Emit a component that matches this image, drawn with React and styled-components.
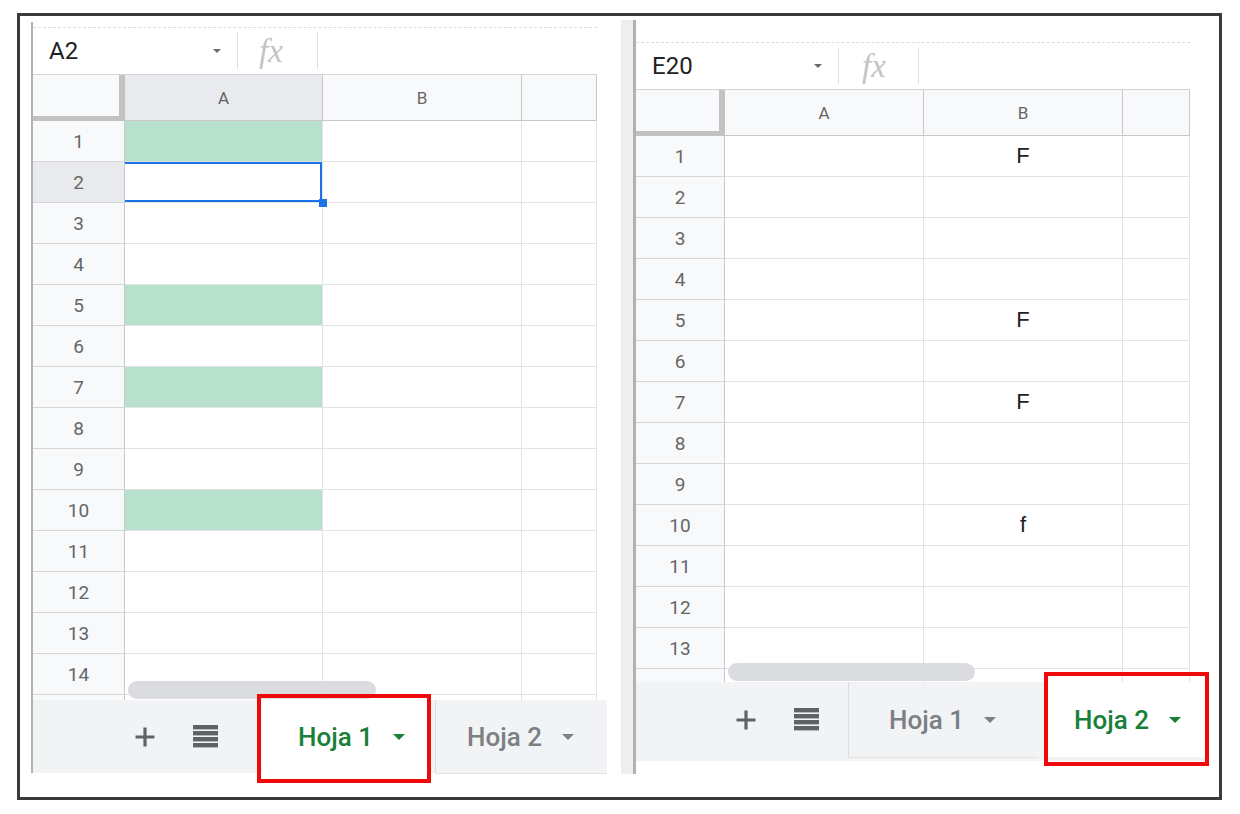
import React from 'react'
import styled, { createGlobalStyle } from 'styled-components'

const GlobalStyle = createGlobalStyle`
  body {
    margin: 0;
    background: #fff;
    font-family: Roboto, "Liberation Sans", Arial, sans-serif;
  }
`

const sheets = [
  {
    id: 'left',
    panel: { width: 576, height: 751, offset: 2, strip: 0, line: 2 },
    topGap: 5,
    width: 564,
    nameBox: 'A2',
    nameWidth: 204,
    fxPad: 21,
    columns: [92, 198, 199, 75],
    letters: ['A', 'B', ''],
    selectedCol: 0,
    selectedRow: 2,
    gridHeight: 626,
    rows: 15,
    labeled: 14,
    fills: [1, 5, 7, 10],
    values: {},
    scroll: { left: 95, width: 248 },
    tabBar: { width: 574, height: 73, tabHeight: 73, padLeft: 82, start: 27, gap: 5 },
    tabs: [
      { label: 'Hoja 1', active: true, width: 168, pad: 36 },
      { label: 'Hoja 2', active: false, width: 172, pad: 31 },
    ],
    mark: { left: 226, top: 672, width: 174, height: 89 },
  },
  {
    id: 'right',
    panel: { width: 588, height: 754, offset: 0, strip: 12, line: 3 },
    topGap: 22,
    width: 554,
    nameBox: 'E20',
    nameWidth: 202,
    fxPad: 23,
    columns: [89, 199, 199, 67],
    letters: ['A', 'B', ''],
    selectedCol: -1,
    selectedRow: -1,
    gridHeight: 593,
    rows: 14,
    labeled: 13,
    fills: [],
    values: { 1: 'F', 5: 'F', 7: 'F', 10: 'f' },
    scroll: { left: 92, width: 247 },
    tabBar: { width: 573, height: 79, tabHeight: 75, padLeft: 80, start: 12, gap: 6 },
    tabs: [
      { label: 'Hoja 1', active: false, width: 190, pad: 40 },
      { label: 'Hoja 2', active: true, width: 165, pad: 30 },
    ],
    mark: { left: 423, top: 652, width: 165, height: 94 },
  },
]

function Sheet({ s }) {
  const rows = Array.from({ length: s.rows }, (_, i) => i + 1)
  return (
    <Panel $width={s.panel.width} $height={s.panel.height} $offset={s.panel.offset}>
      <Strip $width={s.panel.strip} $line={s.panel.line} />
      <Body>
        <TopGap $h={s.topGap} />
        <FormulaBar $width={s.width}>
          <NameBox $width={s.nameWidth}>
            {s.nameBox}
            <Caret $size={4} $color="#6b6b6b" />
          </NameBox>
          <Divider />
          <Fx $pad={s.fxPad}>fx</Fx>
          <Divider />
        </FormulaBar>
        <GridArea $width={s.width} $height={s.gridHeight}>
          <Grid $columns={s.columns}>
            <Corner />
            {s.letters.map((l, i) => (
              <HeadCell key={i} $selected={i === s.selectedCol}>{l}</HeadCell>
            ))}
            {rows.map((r) => (
              <React.Fragment key={r}>
                <RowHead $selected={r === s.selectedRow}>{r <= s.labeled ? r : ''}</RowHead>
                <Cell
                  $fill={s.fills.includes(r)}
                  $selected={s.selectedCol === 0 && r === s.selectedRow}
                />
                <Cell>{s.values[r]}</Cell>
                <Cell />
              </React.Fragment>
            ))}
          </Grid>
          <Scrollbar $left={s.scroll.left} $width={s.scroll.width} />
        </GridArea>
        <TabBar $width={s.tabBar.width} $height={s.tabBar.height} $pad={s.tabBar.padLeft}>
          <IconSlot $height={s.tabBar.tabHeight}>
            <svg width="22" height="22" viewBox="0 0 22 22">
              <path d="M11 1.5v19M1.5 11h19" stroke="#5f6368" strokeWidth="3.2" fill="none" />
            </svg>
          </IconSlot>
          <IconSlot $height={s.tabBar.tabHeight}>
            <svg width="25" height="23" viewBox="0 0 25 23">
              {[0, 6, 12, 18].map((y) => (
                <rect key={y} x="0" y={y} width="25" height="4.4" fill="#5f6368" />
              ))}
            </svg>
          </IconSlot>
          <Tabs $start={s.tabBar.start} $gap={s.tabBar.gap}>
            {s.tabs.map((t) => (
              <Tab
                key={t.label}
                $active={t.active}
                $width={t.width}
                $pad={t.pad}
                $height={s.tabBar.tabHeight}
              >
                {t.label}
                <Caret $size={6} $color={t.active ? '#188038' : '#7c7f83'} />
              </Tab>
            ))}
          </Tabs>
        </TabBar>
      </Body>
      <Mark $left={s.mark.left} $top={s.mark.top} $width={s.mark.width} $height={s.mark.height} />
    </Panel>
  )
}

export default function App() {
  return (
    <>
      <GlobalStyle />
      <Frame>
        {sheets.map((s) => (
          <Sheet key={s.id} s={s} />
        ))}
      </Frame>
    </>
  )
}

const Frame = styled.div`
  box-sizing: border-box;
  width: 1205px;
  height: 787px;
  margin: 13px 0 0 17px;
  border: 3px solid #3a3a3a;
  display: flex;
  align-items: flex-start;
  gap: 14px;
  padding: 4px 0 0 11px;
`

const Panel = styled.div`
  position: relative;
  flex: none;
  display: flex;
  width: ${(p) => p.$width}px;
  height: ${(p) => p.$height}px;
  margin-top: ${(p) => p.$offset}px;
`

const Strip = styled.div`
  flex: none;
  width: ${(p) => p.$width}px;
  background: #eceef0;
  border-right: ${(p) => p.$line}px solid #b2b2b2;
`

const Body = styled.div`
  flex: 1;
  min-width: 0;
  display: flex;
  flex-direction: column;
`

const TopGap = styled.div`
  height: ${(p) => p.$h}px;
  flex: none;
`

const FormulaBar = styled.div`
  box-sizing: border-box;
  display: flex;
  align-items: center;
  width: ${(p) => p.$width}px;
  height: 47px;
  flex: none;
  border-top: 1px dashed #dcdcdc;
  background: #fff;
`

const NameBox = styled.div`
  box-sizing: border-box;
  display: flex;
  align-items: center;
  justify-content: space-between;
  width: ${(p) => p.$width}px;
  padding: 0 16px;
  font-size: 24px;
  color: #222;
`

const Caret = styled.span`
  display: inline-block;
  width: 0;
  height: 0;
  border-left: ${(p) => p.$size}px solid transparent;
  border-right: ${(p) => p.$size}px solid transparent;
  border-top: ${(p) => p.$size}px solid ${(p) => p.$color};
`

const Divider = styled.div`
  width: 1px;
  height: 36px;
  background: #e0e0e0;
`

const Fx = styled.div`
  box-sizing: border-box;
  width: 79px;
  padding-left: ${(p) => p.$pad}px;
  font-family: "Liberation Serif", "DejaVu Serif", serif;
  font-style: italic;
  font-size: 33px;
  line-height: 1;
  color: #c4c4c4;
`

const GridArea = styled.div`
  position: relative;
  box-sizing: border-box;
  flex: none;
  width: ${(p) => p.$width}px;
  height: ${(p) => p.$height}px;
  overflow: hidden;
  border-top: 1px solid #d4d4d4;
  background: #fff;
`

const Grid = styled.div`
  display: grid;
  grid-template-columns: ${(p) => p.$columns.map((c) => c + 'px').join(' ')};
  grid-template-rows: 46px;
  grid-auto-rows: 41px;
`

const Corner = styled.div`
  box-sizing: border-box;
  background: #f8f9fa;
  border-right: 6px solid #c2c2c2;
  border-bottom: 5px solid #c2c2c2;
`

const HeadCell = styled.div`
  box-sizing: border-box;
  display: flex;
  align-items: center;
  justify-content: center;
  background: ${(p) => (p.$selected ? '#e8eaed' : '#f8f9fa')};
  border-right: 1px solid #c8c8c8;
  border-bottom: 1px solid #c8c8c8;
  font-size: 17px;
  color: #666;
`

const RowHead = styled.div`
  box-sizing: border-box;
  display: flex;
  align-items: center;
  justify-content: center;
  background: ${(p) => (p.$selected ? '#e8eaed' : '#f8f9fa')};
  border-right: 1px solid #c8c8c8;
  border-bottom: 1px solid #d6d6d6;
  font-size: 19px;
  color: #666;
`

const Cell = styled.div`
  position: relative;
  box-sizing: border-box;
  display: flex;
  align-items: center;
  justify-content: center;
  background: ${(p) => (p.$fill ? '#b7e1cd' : '#fff')};
  border-right: 1px solid #e2e3e3;
  border-bottom: 1px solid #e2e3e3;
  font-family: "Liberation Sans", Arial, sans-serif;
  font-size: 22px;
  color: #222;
  ${(p) =>
    p.$selected &&
    `
    box-shadow: inset 0 2px #1a73e8, inset -2px 0 #1a73e8, inset 0 -2px #1a73e8;
    &::after {
      content: '';
      position: absolute;
      right: -5px;
      bottom: -5px;
      width: 8px;
      height: 8px;
      background: #1a73e8;
      z-index: 1;
    }
  `}
`

const Scrollbar = styled.div`
  position: absolute;
  left: ${(p) => p.$left}px;
  bottom: 1px;
  width: ${(p) => p.$width}px;
  height: 18px;
  border-radius: 9px;
  background: #dadce0;
`

const TabBar = styled.div`
  box-sizing: border-box;
  flex: none;
  display: flex;
  align-items: flex-start;
  width: ${(p) => p.$width}px;
  height: ${(p) => p.$height}px;
  padding-left: ${(p) => p.$pad}px;
  background: #f1f3f4;
`

const IconSlot = styled.div`
  width: 60px;
  height: ${(p) => p.$height}px;
  display: flex;
  align-items: center;
  justify-content: center;
`

const Tabs = styled.div`
  display: flex;
  gap: ${(p) => p.$gap}px;
  margin-left: ${(p) => p.$start}px;
`

const Tab = styled.div`
  box-sizing: border-box;
  display: flex;
  align-items: center;
  gap: 20px;
  width: ${(p) => p.$width}px;
  height: ${(p) => p.$height}px;
  padding-left: ${(p) => p.$pad}px;
  background: ${(p) => (p.$active ? '#fff' : '#f1f3f4')};
  border-left: ${(p) => (p.$active ? 'none' : '1px solid #dadce0')};
  box-shadow: ${(p) => (p.$active ? 'none' : '0 1px 0 #e3e3e3')};
  font-size: 26px;
  font-weight: 500;
  color: ${(p) => (p.$active ? '#188038' : '#7c7f83')};
`

const Mark = styled.div`
  position: absolute;
  box-sizing: border-box;
  left: ${(p) => p.$left}px;
  top: ${(p) => p.$top}px;
  width: ${(p) => p.$width}px;
  height: ${(p) => p.$height}px;
  border: 4px solid #ee0a0a;
  pointer-events: none;
`
